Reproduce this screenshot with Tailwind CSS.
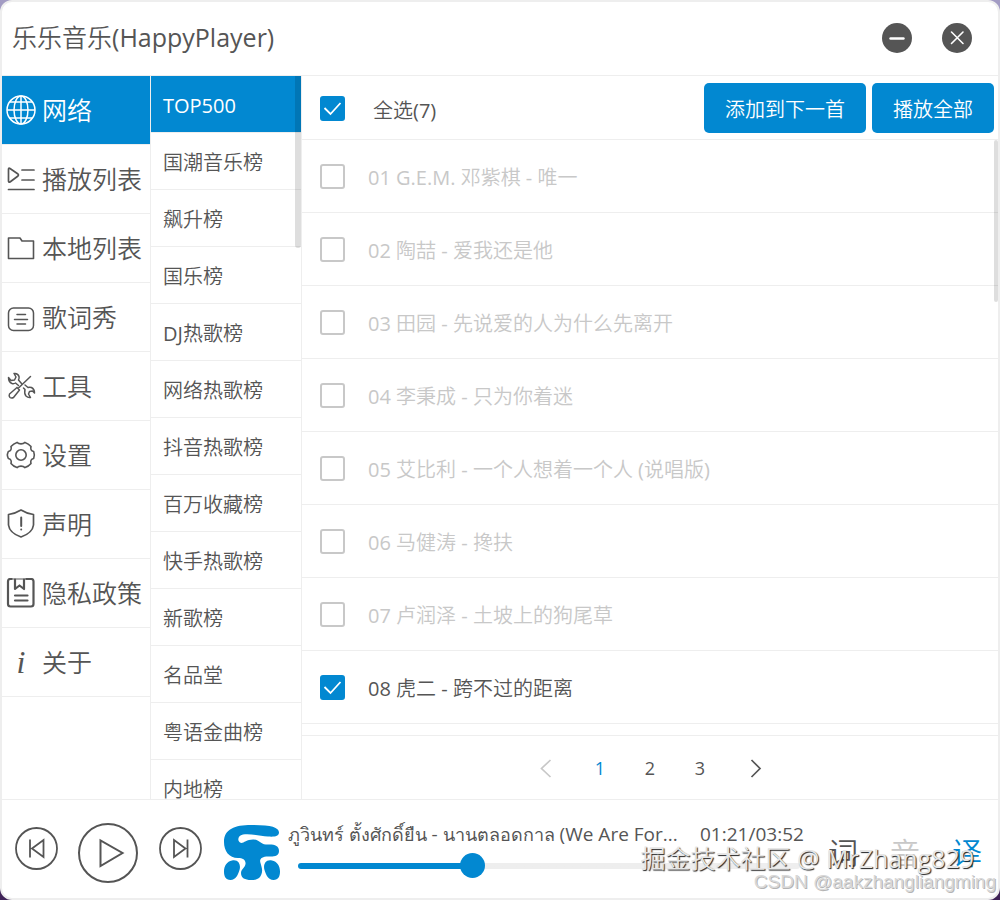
<!DOCTYPE html>
<html lang="zh-CN">
<head>
  <meta charset="UTF-8" />
  <meta name="viewport" content="width=device-width, initial-scale=1.0" />
  <title>乐乐音乐(HappyPlayer)</title>
  <script src="https://cdn.jsdelivr.net/npm/@tailwindcss/browser@4"></script>
</head>
<body class="h-screen overflow-hidden bg-linear-to-b from-[#a39cc4] to-[#3f2257] text-[#555] font-['Open_Sans','Noto_Sans_CJK_SC_DemiLight','Noto_Sans_CJK_SC',sans-serif]">
  <div class="relative flex h-screen flex-col overflow-hidden rounded-xl border-2 border-[#eeeeee] bg-white">

    <!-- Title bar -->
    <header class="flex h-[74px] shrink-0 items-center justify-between border-b border-[#eeeeee] pr-[26px] pb-0.5 pl-2.5">
      <h1 class="pb-0.5 text-[25px] leading-8">乐乐音乐<span class="font-medium">(HappyPlayer)</span></h1>
      <div class="flex gap-[30px]">
        <button type="button" aria-label="最小化" class="grid size-[30px] place-items-center rounded-full bg-[#555] text-white">
          <svg class="size-[30px]" viewBox="0 0 30 30" fill="none" stroke="currentColor" stroke-width="2.4" stroke-linecap="round"><path d="M8.5 15.5h13" /></svg>
        </button>
        <button type="button" aria-label="关闭" class="grid size-[30px] place-items-center rounded-full bg-[#555] text-white">
          <svg class="size-[30px]" viewBox="0 0 30 30" fill="none" stroke="currentColor" stroke-width="1.6" stroke-linecap="round"><path d="M9.500 9l11.500 11.500M21 9L9.500 20.500" /></svg>
        </button>
      </div>
    </header>

    <div class="flex min-h-0 flex-1">
      <!-- Main menu -->
      <nav class="w-[149px] shrink-0 border-r border-[#eeeeee] text-[25px] leading-8">
        <a href="#" class="flex h-[69px] items-center gap-1.5 border-b border-[#eeeeee] bg-[#0288d1] bg-clip-padding pl-1 text-white">
          <svg class="size-[30px]" viewBox="0 0 30 30" fill="none" stroke="currentColor" stroke-width="1.5"><circle cx="15" cy="15" r="14" /><ellipse cx="15" cy="15" rx="7" ry="14" /><path d="M15 1v28M1 15h28M3.500 7h23M3.500 23h23" /></svg>
          网络
        </a>
        <a href="#" class="flex h-[69px] items-center gap-1.5 border-b border-[#eeeeee] pl-1">
          <svg class="size-[30px]" viewBox="0 0 30 30" fill="none" stroke="currentColor" stroke-width="1.7" stroke-linecap="round" stroke-linejoin="round"><path d="M2.500 5.500q0-2 1.500-1l8 5.500q1 1 0 2L4 18q-1.500.5-1.500-1zM16 6h12M16 16h12M2.500 25.500H28" /></svg>
          播放列表
        </a>
        <a href="#" class="flex h-[69px] items-center gap-1.5 border-b border-[#eeeeee] pl-1">
          <svg class="size-[30px]" viewBox="0 0 30 30" fill="none" stroke="currentColor" stroke-width="1.6" stroke-linejoin="round"><path d="M2.500 5h11.500l2 3h11.500v17.500h-25z" /></svg>
          本地列表
        </a>
        <a href="#" class="flex h-[69px] items-center gap-1.5 border-b border-[#eeeeee] pl-1">
          <svg class="size-[30px]" viewBox="0 0 30 30" fill="none" stroke="currentColor" stroke-width="1.5" stroke-linecap="round"><rect x="2.500" y="6" width="25" height="22.500" rx="5" /><path d="M11 12.500h8.500M8.500 17.500h13M11 22h8.500" /></svg>
          歌词秀
        </a>
        <a href="#" class="flex h-[69px] items-center gap-1.5 border-b border-[#eeeeee] pl-1">
          <svg class="size-[30px]" viewBox="0 0 30 30" fill="none" stroke="currentColor" stroke-width="1.5" stroke-linecap="round" stroke-linejoin="round"><path d="M24.500 5.500L12 17.500M11 16.500l2.500 2.500M11 16.500l-7.500 6.500q-1 2 .5 3.500 1.500 1 3.500 0L13.500 19M8 2.500q4-.5 5 3 .5 2-.5 3.500l3 3.500M8 2.500l2 3.500-1.500 3-3.500.5-2.500-3q0 4.500 3.500 6 2 .5 3.500-.5l3 2.500M17.500 17l1.500 1.500q-1 4 1 6.500 2 2 4.500 1.500l-2-3.500 1-2.500 3-.5 2 2q0-4-3-5.500-2-.5-3.500 0l-3-2.500" /></svg>
          工具
        </a>
        <a href="#" class="flex h-[69px] items-center gap-1.5 border-b border-[#eeeeee] pl-1">
          <svg class="size-[30px]" viewBox="0 0 30 30" fill="none" stroke="currentColor" stroke-width="1.6" stroke-linejoin="round"><path d="M27.670 11.500Q29 15 27.670 18.500C25 19 24.300 21 25 23.500 22.500 26.500 21 27 19 27.600 17 25.600 13 25.600 11 27.600 9 27 7.500 26.500 5 23.500 5.700 21 5 19 2.330 18.500 1 15 1 15 2.330 11.500 5 11 5.700 9 5 6.500 7.500 3.500 9 3 11 2.400 13 4.400 17 4.400 19 2.400 21 3 22.500 3.500 25 6.500 24.300 9 25 11 27.670 11.500z" /><circle cx="15" cy="15" r="5.200" /></svg>
          设置
        </a>
        <a href="#" class="flex h-[69px] items-center gap-1.5 border-b border-[#eeeeee] pl-1">
          <svg class="size-[30px]" viewBox="0 0 30 30" fill="none" stroke="currentColor" stroke-width="1.7" stroke-linecap="round" stroke-linejoin="round"><path d="M15 1q5.500 3.500 12.500 4.500V16q-1 8-12.500 12Q3.500 24 2.500 16V5.500Q9.500 4.500 15 1z" /><path stroke-width="2" d="M15.200 8.500v8.500M15.200 20.500v.1" /></svg>
          声明
        </a>
        <a href="#" class="flex h-[69px] items-center gap-1.5 border-b border-[#eeeeee] pl-1">
          <svg class="size-[30px]" viewBox="0 0 30 30" fill="none" stroke="currentColor" stroke-width="2.200" stroke-linecap="round" stroke-linejoin="round"><path d="M5.500 1H4.500q-2.500 0-2.500 2.500v22.500q0 2.500 2.500 2.500h20.500q2.500 0 2.500-2.500V3.500q0-2.500-2.500-2.500h-4.500M9 1.500v9.500l4.500-3.500 4.500 3.500V1.500M9 17.500h12.500M9 22.500h12.500" /><path stroke-width="1" d="M5.500 1h15" /></svg>
          隐私政策
        </a>
        <a href="#" class="flex h-[69px] items-center gap-1.5 border-b border-[#eeeeee] pl-1">
          <span class="w-[30px] text-center font-['Liberation_Serif',serif] text-[32px] leading-8 italic">i</span>
          关于
        </a>
      </nav>

      <!-- Charts -->
      <nav class="relative w-[151px] shrink-0 overflow-hidden border-r border-[#eeeeee] text-[20px] leading-7">
        <a href="#" class="flex h-[57px] items-center border-b border-[#eeeeee] bg-[#0288d1] bg-clip-padding pt-1 pl-3 text-white">TOP500</a>
        <a href="#" class="flex h-[57px] items-center border-b border-[#eeeeee] pt-1 pl-3">国潮音乐榜</a>
        <a href="#" class="flex h-[57px] items-center border-b border-[#eeeeee] pt-1 pl-3">飙升榜</a>
        <a href="#" class="flex h-[57px] items-center border-b border-[#eeeeee] pt-1 pl-3">国乐榜</a>
        <a href="#" class="flex h-[57px] items-center border-b border-[#eeeeee] pt-1 pl-3">DJ热歌榜</a>
        <a href="#" class="flex h-[57px] items-center border-b border-[#eeeeee] pt-1 pl-3">网络热歌榜</a>
        <a href="#" class="flex h-[57px] items-center border-b border-[#eeeeee] pt-1 pl-3">抖音热歌榜</a>
        <a href="#" class="flex h-[57px] items-center border-b border-[#eeeeee] pt-1 pl-3">百万收藏榜</a>
        <a href="#" class="flex h-[57px] items-center border-b border-[#eeeeee] pt-1 pl-3">快手热歌榜</a>
        <a href="#" class="flex h-[57px] items-center border-b border-[#eeeeee] pt-1 pl-3">新歌榜</a>
        <a href="#" class="flex h-[57px] items-center border-b border-[#eeeeee] pt-1 pl-3">名品堂</a>
        <a href="#" class="flex h-[57px] items-center border-b border-[#eeeeee] pt-1 pl-3">粤语金曲榜</a>
        <a href="#" class="flex h-[57px] items-center border-b border-[#eeeeee] pt-1 pl-3">内地榜</a>
        <div class="absolute top-0 right-0 h-[172px] w-1.5 rounded-b-sm bg-black/13"></div>
      </nav>

      <!-- Songs -->
      <main class="flex min-w-0 flex-1 flex-col text-[20px] leading-7">
        <div class="flex h-16 shrink-0 items-center justify-between border-b border-[#eeeeee] pr-1 pl-[18px]">
          <label class="flex items-center gap-7 pt-0.5">
            <span class="grid">
              <input type="checkbox" checked class="peer col-start-1 row-start-1 size-[25px] appearance-none rounded-[3px] border-2 border-[#c8c8c8] checked:border-[#0288d1] checked:bg-[#0288d1]" />
              <svg class="pointer-events-none col-start-1 row-start-1 hidden size-[25px] text-white peer-checked:block" viewBox="0 0 25 25" fill="none" stroke="currentColor" stroke-width="1.8"><path d="M4.500 12l6 6L20.500 7" /></svg>
            </span>
            <span class="pt-1">全选(7)</span>
          </label>
          <div class="flex gap-1.5">
            <button type="button" class="h-[50px] rounded-[5px] bg-[#0288d1] px-[21px] pt-1 text-white">添加到下一首</button>
            <button type="button" class="h-[50px] rounded-[5px] bg-[#0288d1] px-[21px] pt-1 text-white">播放全部</button>
          </div>
        </div>

        <div id="songList" class="relative min-h-0 flex-1 overflow-hidden">
          <div class="absolute top-0 right-0 h-[162px] w-1 rounded-sm bg-black/13"></div>
        </div>

        <div class="flex h-16 shrink-0 items-center justify-center border-t border-[#eeeeee] text-[18px]">
          <button type="button" disabled aria-label="上一页" class="grid w-[60px] place-items-center text-[#c8c8c8]">
            <svg class="size-5" viewBox="0 0 20 20" fill="none" stroke="currentColor" stroke-width="1.7"><path d="M15.500 2L6.500 10.500l9 8.500" /></svg>
          </button>
          <button type="button" class="w-[50px] text-[#0288d1]">1</button>
          <button type="button" class="w-[50px]">2</button>
          <button type="button" class="w-[50px]">3</button>
          <button type="button" aria-label="下一页" class="grid w-[60px] place-items-center">
            <svg class="size-5" viewBox="0 0 20 20" fill="none" stroke="currentColor" stroke-width="1.7"><path d="M6.500 2l8.500 8.500L6.500 19" /></svg>
          </button>
        </div>
      </main>
    </div>

    <!-- Player -->
    <footer class="flex h-[99px] shrink-0 items-center border-t border-[#eeeeee] pl-3">
      <div class="flex items-start gap-[19px] pt-2">
        <button type="button" aria-label="上一首" class="pt-1">
          <svg class="size-11" viewBox="0 0 44 44" fill="none" stroke="currentColor" stroke-width="1.8"><circle cx="22.500" cy="22.500" r="20.500" /><path d="M16 13.500v18M29.500 14v17L18 22.500z" /></svg>
        </button>
        <button type="button" aria-label="播放">
          <svg class="size-[62px]" viewBox="0 0 62 62" fill="none" stroke="currentColor" stroke-width="2"><circle cx="31" cy="31" r="29" /><path d="M23.500 18.500v25.500L45.500 31z" /></svg>
        </button>
        <button type="button" aria-label="下一首" class="pt-1">
          <svg class="size-11" viewBox="0 0 44 44" fill="none" stroke="currentColor" stroke-width="1.8"><circle cx="22.500" cy="22.500" r="20.500" /><path d="M29.500 13.500v18M16 14v17L27.500 22.500z" /></svg>
        </button>
      </div>
      <svg class="mt-2 ml-5 h-[56px] w-[58px] shrink-0 text-[#0288d1]" viewBox="-2 0 58 56" fill="currentColor">
        <path d="M27 0C46 0 55 2 55 7.500c0 4-5 4.500-11 4-8-.5-17-3-25-2-5 1-6 5.500-3 8 3 2 6-3.500 14-3 6 .5 6 4.500 12 5 8-.5 13 .5 13 6.500 0 5-5 6-11 5.500-6 0-9 2.500-7.500 6.500 1 4 2.500 7 1 11-1.500 5-5.500 6-10.500 6-6 0-10-2-10-7 0-4 4-5 4.500-9 .5-4-2.500-6-7.500-6C5 33 0 26 0 17 0 4 11 0 27 0z" />
        <path d="M8 35.500c7-1.500 9 5 7.500 9.500C14 50 12 54.500 6.500 55 1.500 55 0 51 0 46.500 0 41 3 36.500 8 35.500zM48 35.500c-7-1.500-9 5-7.500 9.500 1.500 5 3.500 9.500 9 10 5 0 6.500-4 6.500-8.500 0-5.500-3-10-8-11z" />
      </svg>
      <div class="ml-2 flex w-[520px] flex-col gap-1.5">
        <div class="flex gap-4 text-[19px] leading-7 whitespace-nowrap">
          <p class="w-[396px]"><span class="text-[18px]">ภูวินทร์ ตั้งศักดิ์ยืน</span> - <span class="text-[18px]">นานตลอดกาล</span> (We Are For...</p>
          <p>01:21/03:52</p>
        </div>
        <input type="range" aria-label="播放进度" min="0" max="232" value="79" class="ml-2.5 h-[25px] w-[502px] appearance-none bg-transparent [&::-webkit-slider-runnable-track]:h-1.5 [&::-webkit-slider-runnable-track]:rounded-full [&::-webkit-slider-runnable-track]:bg-linear-to-r [&::-webkit-slider-runnable-track]:from-[#0288d1] [&::-webkit-slider-runnable-track]:from-35% [&::-webkit-slider-runnable-track]:to-[#eeeeee] [&::-webkit-slider-runnable-track]:to-35% [&::-webkit-slider-thumb]:-mt-2.5 [&::-webkit-slider-thumb]:size-[25px] [&::-webkit-slider-thumb]:appearance-none [&::-webkit-slider-thumb]:rounded-full [&::-webkit-slider-thumb]:bg-[#0288d1]" />
      </div>
      <div class="ml-5 flex gap-8 pt-2 text-[30px] leading-10">
        <button type="button">词</button>
        <button type="button" class="text-[#c8c8c8]">音</button>
        <button type="button" class="text-[#0288d1]">译</button>
      </div>
    </footer>

    <!-- Watermarks -->
    <p class="pointer-events-none absolute right-6 bottom-6 text-[25px] leading-8 whitespace-nowrap text-[#e6e6e6] text-shadow-[1px_1px_1px_#222]">掘金技术社区 @ MrZhang829</p>
    <p class="pointer-events-none absolute right-0.5 bottom-0.5 font-['Liberation_Sans',sans-serif] text-[19px] leading-7 whitespace-nowrap text-[#d8d8d8] text-shadow-[1px_1px_0px_#b4b4b4]">CSDN @aakzhangliangming</p>
  </div>

  <script>
    const songs = [
      { name: '01 G.E.M. 邓紫棋 - 唯一' },
      { name: '02 陶喆 - 爱我还是他' },
      { name: '03 田园 - 先说爱的人为什么先离开' },
      { name: '04 李秉成 - 只为你着迷' },
      { name: '05 艾比利 - 一个人想着一个人 (说唱版)' },
      { name: '06 马健涛 - 搀扶' },
      { name: '07 卢润泽 - 土坡上的狗尾草' },
      { name: '08 虎二 - 跨不过的距离', playable: true },
    ];

    document.getElementById('songList').insertAdjacentHTML('afterbegin', songs.map((song) => `
      <label class="flex h-[73px] items-center gap-[23px] border-b border-[#eeeeee] pl-[18px] ${song.playable ? '' : 'text-[#c8c8c8]'}">
        <span class="grid">
          <input type="checkbox" ${song.playable ? 'checked' : 'disabled'} class="peer col-start-1 row-start-1 size-[25px] appearance-none rounded-[3px] border-2 border-[#c8c8c8] checked:border-[#0288d1] checked:bg-[#0288d1]" />
          <svg class="pointer-events-none col-start-1 row-start-1 hidden size-[25px] text-white peer-checked:block" viewBox="0 0 25 25" fill="none" stroke="currentColor" stroke-width="1.8"><path d="M4.500 12l6 6L20.500 7" /></svg>
        </span>
        <span class="pt-1">${song.name}</span>
      </label>`).join(''));
  </script>
</body>
</html>
